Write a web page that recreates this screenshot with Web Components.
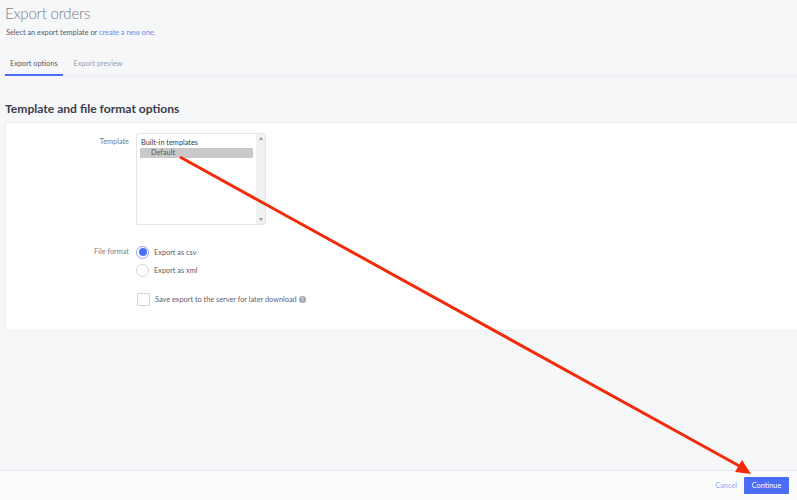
<!DOCTYPE html>
<html>
<head>
<meta charset="utf-8">
<title>Export orders</title>
<style>
html, body { margin: 0; height: 100%; }
body {
    background: #f6f7f9;
    font-family: Lato, "Open Sans", sans-serif;
    color: #313440;
    overflow: hidden;
}
</style>
</head>
<body>
<export-page></export-page>

<script>
class PageHeader extends HTMLElement {
    constructor() {
        super();
        this.attachShadow({mode: 'open'}).innerHTML = `
        <style>
        :host { display: block; padding: 3px 5px 0; }
        h1 { margin: 0; font-size: 15px; letter-spacing: -0.2px; line-height: 20px; font-weight: 300; color: #7b7d88; }
        p { margin: 5px 0 0 1px; font-size: 7.35px; line-height: 10px; color: #5a5d6a; }
        </style>
        <h1><slot name="title"></slot></h1>
        <p><slot></slot></p>`;
    }
}

class TabBar extends HTMLElement {
    constructor() {
        super();
        this.attachShadow({mode: 'open'}).innerHTML = `
        <style>
        :host { display: flex; margin-top: 14px; padding-left: 5px; height: 23px; border-bottom: 1px solid #eceef2; }
        </style>
        <slot></slot>`;
    }
}

class TabItem extends HTMLElement {
    constructor() {
        super();
        this.attachShadow({mode: 'open'}).innerHTML = `
        <style>
        :host { display: block; padding: 0 5px; height: 22px; line-height: 23px; font-size: 7.35px; color: #9a9ca8; margin-right: 6px; border-bottom: 2px solid transparent; }
        :host([active]) { color: #55586a; border-bottom-color: #4a6cf7; }
        </style>
        <slot></slot>`;
    }
}

class FormCard extends HTMLElement {
    constructor() {
        super();
        this.attachShadow({mode: 'open'}).innerHTML = `
        <style>
        :host { display: block; margin-left: 5px; }
        h2 { margin: 0; padding-top: 26px; height: 20px; line-height: 14px; font-size: 12.1px; font-weight: 700; color: #3a3d4a; }
        .card { background: #fff; border: 1px solid #eceef2; border-right: 0; height: 197px; padding-top: 10px; }
        </style>
        <h2><slot name="title"></slot></h2>
        <div class="card"><slot></slot></div>`;
    }
}

class FormRow extends HTMLElement {
    constructor() {
        super();
        this.attachShadow({mode: 'open'}).innerHTML = `
        <style>
        :host { display: grid; grid-template-columns: 123px 1fr; column-gap: 7px; }
        .label { text-align: right; font-size: 7.35px; line-height: 18px; color: #7a7d88; }
        </style>
        <div class="label"><slot name="label"></slot></div>
        <div class="field"><slot></slot></div>`;
    }
}

class TemplateList extends HTMLElement {
    constructor() {
        super();
        this.attachShadow({mode: 'open'}).innerHTML = `
        <style>
        :host { display: block; width: 130px; height: 92px; box-sizing: border-box; border: 1px solid #e3e5ec; border-radius: 2px; position: relative; font-size: 7.35px; color: #3a3d4a; }
        .list { padding: 4px 12px 0 3px; }
        .group { line-height: 10px; padding-left: 1px; }
        .opt { background: #c9c9c9; height: 10px; line-height: 10px; padding-left: 11px; color: #5a5a60; }
        .bar { position: absolute; right: 0; top: 0; bottom: 0; width: 9px; background: #f1f1f1; }
        .bar svg { position: absolute; left: 2.5px; width: 4px; height: 3px; fill: #9a9a9a; }
        .up { top: 3px; }
        .down { bottom: 3px; }
        </style>
        <div class="list">
            <div class="group">Built-in templates</div>
            <div class="opt">Default</div>
        </div>
        <div class="bar">
            <svg class="up" viewBox="0 0 4 3"><path d="M2 0L4 3H0z"/></svg>
            <svg class="down" viewBox="0 0 4 3"><path d="M0 0H4L2 3z"/></svg>
        </div>`;
    }
}

class RadioOption extends HTMLElement {
    constructor() {
        super();
        this.attachShadow({mode: 'open'}).innerHTML = `
        <style>
        :host { display: flex; align-items: center; gap: 5px; height: 18px; font-size: 7.35px; color: #5a5d6a; }
        .dot { width: 11px; height: 11px; border: 1px solid #d3d5de; border-radius: 50%; background: #fff; display: flex; align-items: center; justify-content: center; }
        :host([checked]) .dot { border-color: #8ba3f8; }
        :host([checked]) .dot::after { content: ""; width: 8px; height: 8px; border-radius: 50%; background: #4a6cf7; }
        </style>
        <span class="dot"></span>
        <span><slot></slot></span>`;
    }
}

class CheckOption extends HTMLElement {
    constructor() {
        super();
        this.attachShadow({mode: 'open'}).innerHTML = `
        <style>
        :host { display: flex; align-items: center; height: 14px; font-size: 7.35px; color: #5f626e; }
        .box { width: 11px; height: 11px; border: 1px solid #d3d5de; border-radius: 1px; background: #fff; margin-right: 5px; flex: none; }
        .help { width: 7px; height: 7px; margin-left: 2px; }
        </style>
        <span class="box"></span>
        <span><slot></slot></span>
        <svg class="help" viewBox="0 0 7 7"><circle cx="3.5" cy="3.5" r="3.5" fill="#a3a5ae"/><path d="M2.5 2.7a1 1 0 1 1 1.5.9c-.4.2-.5.4-.5.8" fill="none" stroke="#fff" stroke-width=".7"/><circle cx="3.5" cy="5.5" r=".45" fill="#fff"/></svg>`;
    }
}

class ActionBar extends HTMLElement {
    constructor() {
        super();
        this.attachShadow({mode: 'open'}).innerHTML = `
        <style>
        :host { display: flex; justify-content: flex-end; align-items: center; gap: 7px; position: absolute; left: 0; right: 0; bottom: 0; height: 30px; background: #fcfcfd; border-top: 1px solid #e3e5ec; padding-right: 8px; box-sizing: border-box; font-size: 7.35px; }
        .cancel { color: #8fa6f8; }
        .go { background: #4a6cf7; color: #fff; width: 45px; height: 17px; line-height: 17px; text-align: center; border-radius: 1px; }
        </style>
        <span class="cancel">Cancel</span>
        <span class="go">Continue</span>`;
    }
}

class ExportPage extends HTMLElement {
    constructor() {
        super();
        this.attachShadow({mode: 'open'}).innerHTML = `
        <style>
        :host { display: block; position: relative; height: 500px; }
        .gap-a { height: 18px; }
        .save { margin: 13px 0 0 131px; }
        .arrow { position: absolute; left: 0; top: 0; width: 797px; height: 500px; pointer-events: none; }
        a { color: #6b8cf6; text-decoration: none; }
        </style>
        <page-header>
            <span slot="title">Export orders</span>
            Select an export template or <a href="#">create a new one.</a>
        </page-header>
        <tab-bar>
            <tab-item active>Export options</tab-item>
            <tab-item>Export preview</tab-item>
        </tab-bar>
        <form-card>
            <span slot="title">Template and file format options</span>
            <form-row>
                <span slot="label">Template</span>
                <template-list></template-list>
            </form-row>
            <div class="gap-a"></div>
            <form-row>
                <span slot="label">File format</span>
                <radio-option checked>Export as csv</radio-option>
                <radio-option>Export as xml</radio-option>
            </form-row>
            <div class="save"><check-option>Save export to the server for later download</check-option></div>
        </form-card>
        <action-bar></action-bar>
        <svg class="arrow" viewBox="0 0 797 500">
            <path d="M180 157L743 468" stroke="#f22c0a" stroke-width="3" fill="none"/>
            <path d="M751 474L742 460L735 472z" fill="#f22c0a"/>
        </svg>`;
    }
}

customElements.define('page-header', PageHeader);
customElements.define('tab-bar', TabBar);
customElements.define('tab-item', TabItem);
customElements.define('form-card', FormCard);
customElements.define('form-row', FormRow);
customElements.define('template-list', TemplateList);
customElements.define('radio-option', RadioOption);
customElements.define('check-option', CheckOption);
customElements.define('action-bar', ActionBar);
customElements.define('export-page', ExportPage);
</script>
</body>
</html>
